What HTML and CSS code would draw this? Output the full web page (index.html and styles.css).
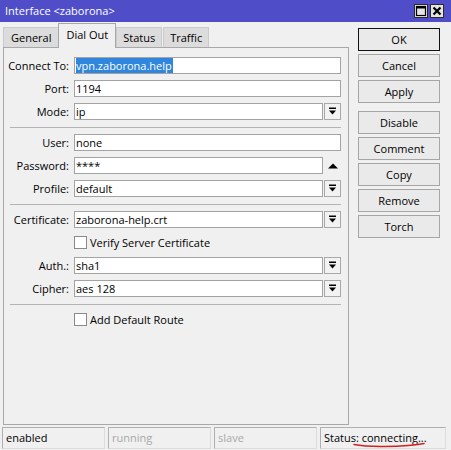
FILE: index.html
```html
<!DOCTYPE html>
<html>
<head>
<meta charset="utf-8">
<title>Interface</title>
<link rel="stylesheet" href="styles.css">
</head>
<body>
<div class="window">
  <div class="titlebar">
    <span class="title">Interface &lt;zaborona&gt;</span>
    <div class="controls">
      <span class="ctl"><svg width="12" height="12" viewBox="0 0 12 12"><rect x="1.5" y="1.5" width="9" height="9" fill="none" stroke="#000" stroke-width="1.2"/><rect x="1.5" y="1.5" width="9" height="2" fill="#000"/></svg></span>
      <span class="ctl"><svg width="12" height="12" viewBox="0 0 12 12"><path d="M2.5 2.5 L9.5 9.5 M9.5 2.5 L2.5 9.5" stroke="#000" stroke-width="2.2"/></svg></span>
    </div>
  </div>
  <div class="content">
    <div class="left">
      <div class="tabs">
        <div class="tab wide">General</div>
        <div class="tab wide active">Dial Out</div>
        <div class="tab">Status</div>
        <div class="tab">Traffic</div>
      </div>
      <div class="panel">
        <div class="row"><label class="lbl">Connect To:</label><div class="field"><span class="sel">vpn.zaborona.help</span></div></div>
        <div class="row"><label class="lbl">Port:</label><div class="field">1194</div></div>
        <div class="row"><label class="lbl">Mode:</label><div class="field short">ip</div><span class="dd"><svg width="15" height="15" viewBox="0 0 15 15"><rect x="4" y="3.5" width="7" height="1.5" fill="#000"/><path d="M4 6.5 H11 L7.5 10.5 Z" fill="#000"/></svg></span></div>
        <div class="sep"></div>
        <div class="row"><label class="lbl">User:</label><div class="field">none</div></div>
        <div class="row"><label class="lbl">Password:</label><div class="field short">****</div><span class="tri"><svg width="17" height="17" viewBox="0 0 17 17"><path d="M4 11.5 H14 L9 6.5 Z" fill="#000"/></svg></span></div>
        <div class="row"><label class="lbl">Profile:</label><div class="field short">default</div><span class="dd"><svg width="15" height="15" viewBox="0 0 15 15"><rect x="4" y="3.5" width="7" height="1.5" fill="#000"/><path d="M4 6.5 H11 L7.5 10.5 Z" fill="#000"/></svg></span></div>
        <div class="sep"></div>
        <div class="row"><label class="lbl">Certificate:</label><div class="field short">zaborona-help.crt</div><span class="dd"><svg width="15" height="15" viewBox="0 0 15 15"><rect x="4" y="3.5" width="7" height="1.5" fill="#000"/><path d="M4 6.5 H11 L7.5 10.5 Z" fill="#000"/></svg></span></div>
        <div class="row check"><span class="box"></span><span>Verify Server Certificate</span></div>
        <div class="row"><label class="lbl">Auth.:</label><div class="field short">sha1</div><span class="dd"><svg width="15" height="15" viewBox="0 0 15 15"><rect x="4" y="3.5" width="7" height="1.5" fill="#000"/><path d="M4 6.5 H11 L7.5 10.5 Z" fill="#000"/></svg></span></div>
        <div class="row"><label class="lbl">Cipher:</label><div class="field short">aes 128</div><span class="dd"><svg width="15" height="15" viewBox="0 0 15 15"><rect x="4" y="3.5" width="7" height="1.5" fill="#000"/><path d="M4 6.5 H11 L7.5 10.5 Z" fill="#000"/></svg></span></div>
        <div class="sep"></div>
        <div class="row check"><span class="box"></span><span>Add Default Route</span></div>
      </div>
    </div>
    <div class="right">
      <div class="btn default">OK</div>
      <div class="btn">Cancel</div>
      <div class="btn">Apply</div>
      <div class="btn group">Disable</div>
      <div class="btn">Comment</div>
      <div class="btn">Copy</div>
      <div class="btn">Remove</div>
      <div class="btn">Torch</div>
    </div>
  </div>
  <div class="statusbar">
    <div class="cell">enabled</div>
    <div class="cell dim">running</div>
    <div class="cell dim">slave</div>
    <div class="cell status">Status: connecting...<svg class="scribble" width="72" height="6" viewBox="0 0 72 6"><path d="M1 2.5 C15 5, 40 5, 55 3.5 S68 2, 71 1.5" fill="none" stroke="#d42020" stroke-width="1.6" stroke-linecap="round"/></svg></div>
  </div>
</div>
</body>
</html>
```
FILE: styles.css
```css
html, body {
  margin: 0;
  padding: 0;
}
body {
  width: 451px;
  height: 450px;
  overflow: hidden;
  background: #f0f0f0;
  font-family: "Open Sans", "Noto Sans", sans-serif;
  font-size: 11px;
  color: #000;
}
.window {
  display: flex;
  flex-direction: column;
  height: 450px;
}
.titlebar {
  height: 22px;
  flex: none;
  background: #4f4ec8;
  color: #fff;
  display: flex;
  align-items: center;
  justify-content: space-between;
  padding: 0 7px 0 5px;
  font-size: 11px;
}
.title {
  line-height: 22px;
  margin-top: -1px;
}
.controls {
  display: flex;
  gap: 2px;
}
.ctl {
  width: 14px;
  height: 14px;
  box-sizing: border-box;
  background: #e4e4e4;
  border: 1px solid #2a2a2a;
  display: flex;
  align-items: center;
  justify-content: center;
}
.content {
  flex: 1;
  display: flex;
  min-height: 0;
}
.left {
  width: 349px;
  flex: none;
  padding-left: 3px;
  box-sizing: border-box;
  display: flex;
  flex-direction: column;
}
.tabs {
  height: 25px;
  flex: none;
  display: flex;
  align-items: flex-end;
}
.tab {
  height: 20px;
  line-height: 19px;
  padding: 0 6px;
  box-sizing: border-box;
  background: #dcdcdc;
  border: 1px solid #cacaca;
  border-bottom: none;
  color: #000;
  position: relative;
}
.tab.wide {
  padding: 0 7px;
}
.tab + .tab {
  margin-left: 1px;
}
.tab.active {
  height: 25px;
  line-height: 21px;
  background: #f0f0f0;
  border-color: #a8a8a8;
  margin: 0 0 -1px -1px;
  z-index: 1;
}
.tab.active + .tab {
  margin-left: 0;
}
.panel {
  flex: 1;
  border: 1px solid #a8a8a8;
  width: 346px;
  box-sizing: border-box;
  padding: 9px 7px 0 0;
  display: flex;
  flex-direction: column;
  gap: 6px;
}
.row {
  display: flex;
  align-items: center;
  height: 17px;
}
.lbl {
  width: 65px;
  margin-right: 5px;
  text-align: right;
  white-space: nowrap;
}
.field {
  width: 267px;
  height: 17px;
  box-sizing: border-box;
  background: #fff;
  border: 1px solid #a3a3a3;
  line-height: 15px;
  padding-left: 1px;
  white-space: nowrap;
  overflow: hidden;
}
.field.short {
  width: 249px;
}
.sel {
  background: #2f86dc;
  color: #fff;
  padding: 0 1px 0 0;
}
.dd {
  width: 17px;
  height: 17px;
  box-sizing: border-box;
  margin-left: 1px;
  border: 1px solid #a8a8a8;
  background: #f2f2f2;
  display: flex;
  align-items: center;
  justify-content: center;
}
.tri {
  width: 17px;
  height: 17px;
  margin-left: 1px;
  display: flex;
}
.sep {
  height: 1px;
  margin: 1px 0 0 6px;
  background: #b4b4b4;
}
.check {
  padding-left: 70px;
  gap: 3px;
}
.box {
  width: 13px;
  height: 13px;
  box-sizing: border-box;
  background: #fff;
  border: 1px solid #8a8a8a;
}
.right {
  flex: 1;
  padding: 6px 0 0 9px;
  display: flex;
  flex-direction: column;
  gap: 3px;
}
.btn {
  width: 82px;
  height: 23px;
  box-sizing: border-box;
  border: 1px solid #a6a6a6;
  background: #eaeaea;
  text-align: center;
  line-height: 21px;
}
.btn.default {
  border-color: #111;
}
.btn.group {
  margin-top: 5px;
}
.statusbar {
  height: 25px;
  flex: none;
  display: flex;
  gap: 3px;
  padding: 2px 5px 1px 2px;
  box-sizing: border-box;
}
.cell {
  width: 103px;
  flex: none;
  box-sizing: border-box;
  border: 1px solid #b0b0b0;
  border-right-color: #dcdcdc;
  border-bottom-color: #dcdcdc;
  padding-left: 3px;
  line-height: 20px;
  white-space: nowrap;
}
.cell.dim {
  color: #a8a8a8;
}
.cell.status {
  flex: 1;
  width: auto;
  position: relative;
}
.scribble {
  position: absolute;
  left: 32px;
  bottom: 0px;
}
```
